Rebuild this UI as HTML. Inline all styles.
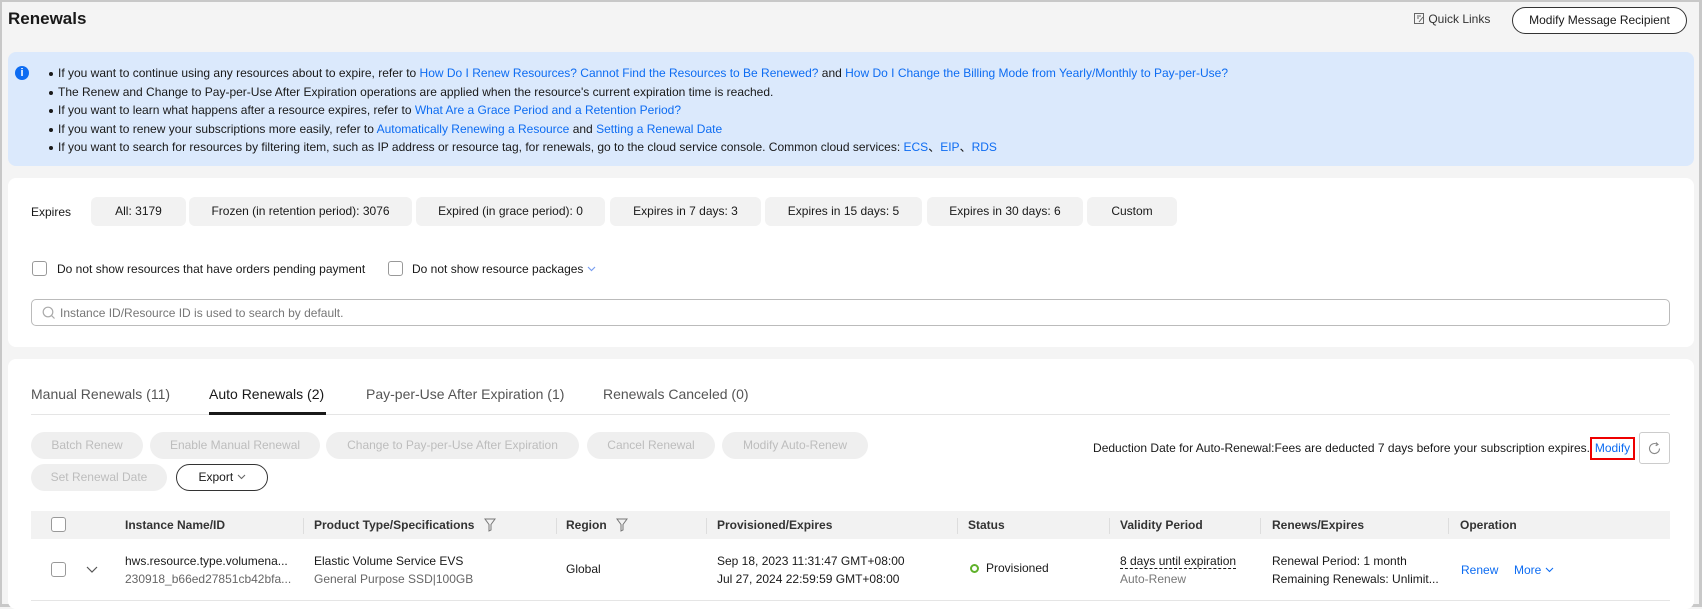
<!DOCTYPE html>
<html><head><meta charset="utf-8"><style>
*{box-sizing:border-box;margin:0;padding:0}
body{width:1702px;height:607px;overflow:hidden;background:#f4f4f4;font-family:"Liberation Sans",Arial,sans-serif;font-size:12px;color:#191919;position:relative}
.frame{position:absolute;left:0;top:0;width:1702px;height:607px;border:2px solid #c8c8c8;border-right-width:3px;border-bottom-width:3px}
.abs{position:absolute;white-space:nowrap}
a{color:#0d6cf2;text-decoration:none}
.card{position:absolute;background:#fff;border-radius:8px}
.pill{position:absolute;top:197px;height:29px;background:#f2f2f2;border-radius:6px;line-height:29px;text-align:center;color:#191919}
.cb{position:absolute;width:15px;height:15px;border:1px solid #999;border-radius:3px;background:#fff}
.btn{position:absolute;height:27px;border-radius:14px;background:#efefef;color:#bdbdbd;line-height:27px;text-align:center}
.th{position:absolute;top:511px;height:28px;line-height:28px;font-weight:bold;color:#333}
.div{position:absolute;top:518px;width:1px;height:16px;background:#ddd}
.ul li{list-style:none;position:relative;height:18.5px;line-height:18.5px}
.ul li:before{content:"";position:absolute;left:-9px;top:8px;width:4px;height:4px;border-radius:50%;background:#191919}
.chev{display:inline-block;vertical-align:1px}
</style></head><body>
<div class="frame"></div>
<div class="abs" style="left:8px;top:9px;font-size:17px;font-weight:bold">Renewals</div>
<div class="abs" style="left:1414px;top:12px;color:#333">
<svg width="11" height="11" viewBox="0 0 11 11" style="vertical-align:-1px"><rect x="0.5" y="0.5" width="9" height="10" fill="none" stroke="#666"/><path d="M3 3h4M3 5h2M5 9l4-5" stroke="#666" fill="none"/></svg> Quick Links</div>
<div class="abs" style="left:1512px;top:7px;width:175px;height:27px;border:1px solid #333;border-radius:14px;background:#fff;text-align:center;line-height:25px">Modify Message Recipient</div>

<div class="card" style="left:8px;top:52px;width:1686px;height:114px;background:#dbe9fc"></div>
<div class="abs" style="left:15px;top:66px;width:14px;height:14px;border-radius:50%;background:#0d6cf2;color:#fff;font-size:11px;font-weight:bold;text-align:center;line-height:14px">i</div>
<ul class="ul abs" style="left:58px;top:64px">
<li>If you want to continue using any resources about to expire, refer to <a>How Do I Renew Resources? Cannot Find the Resources to Be Renewed?</a> and <a>How Do I Change the Billing Mode from Yearly/Monthly to Pay-per-Use?</a></li>
<li>The Renew and Change to Pay-per-Use After Expiration operations are applied when the resource's current expiration time is reached.</li>
<li>If you want to learn what happens after a resource expires, refer to <a>What Are a Grace Period and a Retention Period?</a></li>
<li>If you want to renew your subscriptions more easily, refer to <a>Automatically Renewing a Resource</a> and <a>Setting a Renewal Date</a></li>
<li>If you want to search for resources by filtering item, such as IP address or resource tag, for renewals, go to the cloud service console. Common cloud services: <a>ECS</a>、<a>EIP</a>、<a>RDS</a></li>
</ul>

<div class="card" style="left:8px;top:178px;width:1686px;height:169px"></div>
<div class="abs" style="left:31px;top:205px">Expires</div>
<div class="pill" style="left:91px;width:95px">All: 3179</div>
<div class="pill" style="left:189px;width:223px">Frozen (in retention period): 3076</div>
<div class="pill" style="left:416px;width:189px">Expired (in grace period): 0</div>
<div class="pill" style="left:610px;width:151px">Expires in 7 days: 3</div>
<div class="pill" style="left:765px;width:157px">Expires in 15 days: 5</div>
<div class="pill" style="left:927px;width:156px">Expires in 30 days: 6</div>
<div class="pill" style="left:1087px;width:90px">Custom</div>
<div class="cb" style="left:32px;top:261px"></div>
<div class="abs" style="left:57px;top:262px">Do not show resources that have orders pending payment</div>
<div class="cb" style="left:388px;top:261px"></div>
<div class="abs" style="left:412px;top:262px">Do not show resource packages <svg class="chev" width="9" height="6" viewBox="0 0 9 6"><path d="M1 1l3.5 3.5L8 1" fill="none" stroke="#7a9ff0" stroke-width="1.2"/></svg></div>
<div class="abs" style="left:31px;top:299px;width:1639px;height:27px;border:1px solid #bbb;border-radius:5px;background:#fff"></div>
<svg class="abs" style="left:42px;top:306px" width="14" height="14" viewBox="0 0 14 14"><circle cx="6" cy="6" r="4.8" fill="none" stroke="#aaa" stroke-width="1.2"/><path d="M9.5 9.5l3 3" stroke="#aaa" stroke-width="1.2"/></svg>
<div class="abs" style="left:60px;top:306px;color:#777">Instance ID/Resource ID is used to search by default.</div>

<div class="card" style="left:8px;top:359px;width:1686px;height:250px"></div>
<div class="abs" style="left:31px;top:386px;font-size:14px;color:#555">Manual Renewals (11)</div>
<div class="abs" style="left:209px;top:386px;font-size:14px;color:#191919">Auto Renewals (2)</div>
<div class="abs" style="left:366px;top:386px;font-size:14px;color:#555">Pay-per-Use After Expiration (1)</div>
<div class="abs" style="left:603px;top:386px;font-size:14px;color:#555">Renewals Canceled (0)</div>
<div class="abs" style="left:31px;top:414px;width:1639px;height:1px;background:#e5e5e5"></div>
<div class="abs" style="left:209px;top:412px;width:117px;height:3px;background:#191919"></div>

<div class="btn" style="left:31px;top:432px;width:112px">Batch Renew</div>
<div class="btn" style="left:150px;top:432px;width:170px">Enable Manual Renewal</div>
<div class="btn" style="left:326px;top:432px;width:253px">Change to Pay-per-Use After Expiration</div>
<div class="btn" style="left:587px;top:432px;width:128px">Cancel Renewal</div>
<div class="btn" style="left:722px;top:432px;width:146px">Modify Auto-Renew</div>
<div class="btn" style="left:31px;top:464px;width:136px">Set Renewal Date</div>
<div class="btn" style="left:176px;top:464px;width:92px;background:#fff;border:1px solid #333;color:#191919;line-height:25px">Export <svg class="chev" width="9" height="6" viewBox="0 0 9 6"><path d="M1 1l3.5 3.5L8 1" fill="none" stroke="#666" stroke-width="1.1"/></svg></div>
<div class="abs" style="right:112px;top:441px">Deduction Date for Auto-Renewal:Fees are deducted 7 days before your subscription expires.</div>
<div class="abs" style="left:1590px;top:437px;width:45px;height:23px;border:2px solid #e00;color:#0d6cf2;line-height:19px;text-align:center">Modify</div>
<div class="abs" style="left:1639px;top:432px;width:31px;height:32px;border:1px solid #ccc;border-radius:3px;background:#fff"></div>
<svg class="abs" style="left:1647px;top:441px" width="15" height="15" viewBox="0 0 15 15"><path d="M12.5 7.5A5 5 0 1 1 10 3.2" fill="none" stroke="#888" stroke-width="1.1"/><path d="M9 1.5l2 2-2.3 1.2" fill="none" stroke="#888" stroke-width="1.1"/></svg>

<div class="abs" style="left:31px;top:511px;width:1639px;height:28px;background:#f2f2f2"></div>
<div class="cb" style="left:51px;top:517px"></div>
<div class="th" style="left:125px">Instance Name/ID</div>
<div class="div" style="left:303px"></div>
<div class="th" style="left:314px">Product Type/Specifications</div>
<svg class="abs" style="left:484px;top:518px" width="12" height="14" viewBox="0 0 12 14"><path d="M1 1h10L7 6.5V12l-2 1V6.5z" fill="none" stroke="#777"/></svg>
<div class="div" style="left:556px"></div>
<div class="th" style="left:566px">Region</div>
<svg class="abs" style="left:616px;top:518px" width="12" height="14" viewBox="0 0 12 14"><path d="M1 1h10L7 6.5V12l-2 1V6.5z" fill="none" stroke="#777"/></svg>
<div class="div" style="left:706px"></div>
<div class="th" style="left:717px">Provisioned/Expires</div>
<div class="div" style="left:957px"></div>
<div class="th" style="left:968px">Status</div>
<div class="div" style="left:1109px"></div>
<div class="th" style="left:1120px">Validity Period</div>
<div class="div" style="left:1260px"></div>
<div class="th" style="left:1272px">Renews/Expires</div>
<div class="div" style="left:1448px"></div>
<div class="th" style="left:1460px">Operation</div>

<div class="cb" style="left:51px;top:562px"></div>
<svg class="abs" style="left:86px;top:566px" width="12" height="8" viewBox="0 0 12 8"><path d="M1 1l5 5 5-5" fill="none" stroke="#555" stroke-width="1.2"/></svg>
<div class="abs" style="left:125px;top:554px">hws.resource.type.volumena...</div>
<div class="abs" style="left:125px;top:572px;color:#666">230918_b66ed27851cb42bfa...</div>
<div class="abs" style="left:314px;top:554px">Elastic Volume Service EVS</div>
<div class="abs" style="left:314px;top:572px;color:#666">General Purpose SSD|100GB</div>
<div class="abs" style="left:566px;top:562px">Global</div>
<div class="abs" style="left:717px;top:554px">Sep 18, 2023 11:31:47 GMT+08:00</div>
<div class="abs" style="left:717px;top:572px">Jul 27, 2024 22:59:59 GMT+08:00</div>
<div class="abs" style="left:970px;top:564px;width:9px;height:9px;border:2.5px solid #5fb12a;border-radius:50%"></div>
<div class="abs" style="left:986px;top:561px">Provisioned</div>
<div class="abs" style="left:1120px;top:554px;border-bottom:1px dashed #191919;line-height:14px">8 days until expiration</div>
<div class="abs" style="left:1120px;top:572px;color:#777">Auto-Renew</div>
<div class="abs" style="left:1272px;top:554px">Renewal Period: 1 month</div>
<div class="abs" style="left:1272px;top:572px">Remaining Renewals: Unlimit...</div>
<div class="abs" style="left:1461px;top:563px;color:#0d6cf2">Renew</div>
<div class="abs" style="left:1514px;top:563px;color:#0d6cf2">More <svg class="chev" width="9" height="6" viewBox="0 0 9 6"><path d="M1 1l3.5 3.5L8 1" fill="none" stroke="#0d6cf2" stroke-width="1.1"/></svg></div>
<div class="abs" style="left:31px;top:600px;width:1639px;height:1px;background:#e5e5e5"></div>
</body></html>
